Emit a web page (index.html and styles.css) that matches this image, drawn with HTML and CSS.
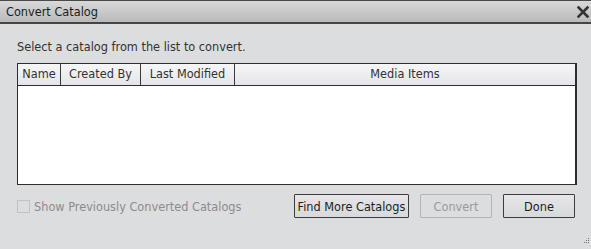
FILE: index.html
```html
<!DOCTYPE html>
<html lang="en">
<head>
  <meta charset="UTF-8" />
  <title>Convert Catalog</title>
  <link rel="stylesheet" href="styles.css">
</head>
<body>
  <div class="dialog">
    <div class="titlebar">
      <span class="title">Convert Catalog</span>
      <span class="close">
        <svg width="12" height="12" viewBox="0 0 12 12">
          <path d="M1.5 1.5 L10.5 10.5 M10.5 1.5 L1.5 10.5" stroke="#333" stroke-width="2.6" stroke-linecap="square" />
        </svg>
      </span>
    </div>

    <div class="content">
      <p class="prompt">Select a catalog from the list to convert.</p>

      <div class="catalog-list">
        <div class="list-head">
          <div class="col">Name</div>
          <div class="col">Created By</div>
          <div class="col">Last Modified</div>
          <div class="col">Media Items</div>
        </div>
        <div class="list-body"></div>
      </div>

      <div class="footer">
        <label class="show-prev">
          <span class="checkbox"></span>
          Show Previously Converted Catalogs
        </label>
        <div class="buttons">
          <button class="btn btn-find">Find More Catalogs</button>
          <button class="btn btn-convert" disabled>Convert</button>
          <button class="btn btn-done">Done</button>
        </div>
      </div>
    </div>

    <div class="grip">
      <svg width="6" height="6" viewBox="0 0 6 6">
        <rect x="4" y="0" width="1" height="1" fill="#777" />
        <rect x="2" y="2" width="1" height="1" fill="#777" />
        <rect x="4" y="2" width="1" height="1" fill="#777" />
        <rect x="0" y="4" width="1" height="1" fill="#777" />
        <rect x="2" y="4" width="1" height="1" fill="#777" />
        <rect x="4" y="4" width="1" height="1" fill="#777" />
      </svg>
    </div>
  </div>
</body>
</html>
```

FILE: styles.css
```css
body {
  margin: 0;
  padding: 0;
  background: #dcdddf;
  font-family: 'DejaVu Sans Condensed', 'DejaVu Sans', sans-serif;
  font-size: 12.6px;
  color: #333;
}

.dialog {
  position: relative;
  width: 591px;
  height: 249px;
  background: #dcdddf;
}

.titlebar {
  height: 21px;
  border-top: 1px solid #4a4a4a;
  border-bottom: 2px solid #454545;
  background: linear-gradient(to bottom, #d9d9d9, #b9b9b9);
  display: flex;
  align-items: center;
  justify-content: space-between;
  padding: 0 2px 0 6px;
}

.title {
  color: #1c1c1c;
}

.close {
  display: flex;
  align-items: center;
}

.content {
  padding: 0 14px 0 17px;
}

.prompt {
  margin: 0;
  padding-top: 16px;
  height: 14px;
  line-height: 14px;
}

.catalog-list {
  margin-top: 9px;
  height: 120px;
  border: 1px solid #2e2e2e;
  border-right-width: 2px;
  background: #fff;
}

.list-head {
  display: grid;
  grid-template-columns: 43px 80px 94px 1fr;
  height: 21px;
  border-bottom: 1px solid #2e2e2e;
  background: linear-gradient(to bottom, #f6f6f7, #e4e5e8);
}

.col {
  border-right: 1px solid #3a3a3a;
  text-align: center;
  line-height: 20px;
  color: #333;
}

.col:last-child {
  border-right: none;
}

.footer {
  display: flex;
  justify-content: space-between;
  align-items: center;
  margin-top: 9px;
  margin-right: 2px;
}

.show-prev {
  display: flex;
  align-items: center;
  gap: 4px;
  color: #8c8c8c;
}

.checkbox {
  width: 11px;
  height: 11px;
  border: 1px solid #c2c2c4;
  background: #dcdddf;
}

.buttons {
  display: flex;
  gap: 11px;
}

.btn {
  height: 24px;
  padding: 0;
  font-family: inherit;
  font-size: 12.6px;
  color: #1e1e1e;
  background: linear-gradient(to bottom, #e6e6e8, #d8d9db);
  border: 1px solid #3c3c3c;
  border-radius: 1px;
}

.btn-find {
  width: 115px;
}

.btn-convert {
  width: 72px;
  color: #9a9a9a;
  border-color: #b4b4b6;
  background: #dcdddf;
}

.btn-done {
  width: 72px;
}

.grip {
  position: absolute;
  right: 1px;
  bottom: 2px;
}
```
